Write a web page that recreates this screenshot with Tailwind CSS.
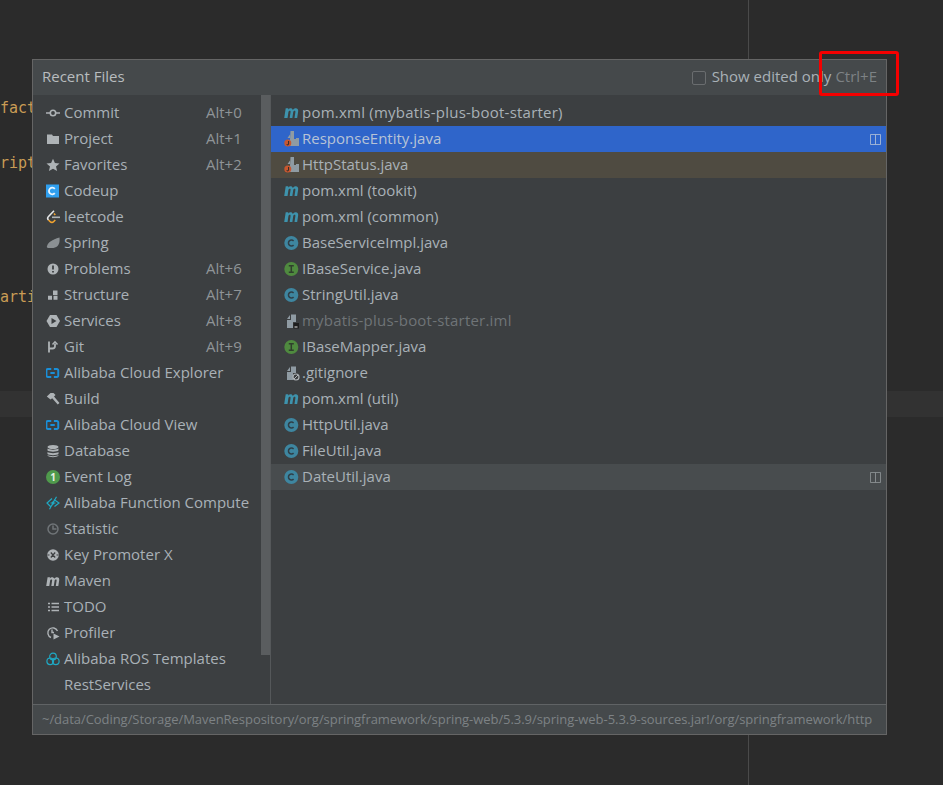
<!DOCTYPE html>
<html lang="en">
<head>
    <meta charset="UTF-8">
    <title>Recent Files</title>
    <script src="https://cdn.jsdelivr.net/npm/@tailwindcss/browser@4"></script>
</head>
<body class="m-0 bg-[#2b2b2b] overflow-hidden">
    <svg class="hidden">
        <symbol id="mvn" viewBox="0.8 4 14 9" preserveAspectRatio="none"><path d="M1 13 2.400 4.300h2.400l-.2 1.200C5.200 4.700 6 4.200 7 4.200c1 0 1.700.5 2 1.500.8-1 1.700-1.500 2.800-1.500 1.700 0 2.500 1.100 2.200 3l-.9 5.800h-2.500l.8-5.200c.1-.9-.1-1.300-.7-1.300-.6 0-1.200.5-1.300 1.300l-.8 5.200H6.100l.8-5.200c.1-.9-.1-1.300-.7-1.300-.6 0-1.200.5-1.300 1.300l-.8 5.200z" fill="currentColor"/></symbol>
        <symbol id="cls" viewBox="0 0 16 16"><circle cx="7.300" cy="8" r="7" fill="#3e86a0"/><path d="M9.600 5.900A3 3 0 1 0 9.600 10.100" fill="none" stroke="#2f3f48" stroke-width="1.500"/></symbol>
        <symbol id="ifc" viewBox="0 0 16 16"><circle cx="7.300" cy="8" r="7" fill="#4f8a3f"/><path d="M4.800 4.800h5M4.800 11.200h5M7.300 4.800v6.400" fill="none" stroke="#2f3f2c" stroke-width="1.500"/></symbol>
        <symbol id="ali" viewBox="0 0 16 16"><path d="M6 3.500H2a1.500 1.500 0 0 0-1.500 1.500v6a1.500 1.500 0 0 0 1.500 1.500H6M9 3.500h3.500a1.500 1.500 0 0 1 1.500 1.500v6a1.500 1.500 0 0 1-1.500 1.500H9M5 8h5" fill="none" stroke="#1a8fd8" stroke-width="2.200"/></symbol>
        <symbol id="jfile" viewBox="0 0 16 16"><path d="M6.500 0h3.500v8h2v-1h3v8H5.500V9H6zM3.500 7 6 3.500V7z" fill="#8f9ba3"/><circle cx="3.800" cy="12" r="3.500" fill="#c9572f"/><path d="M4.600 10v3a.9.9 0 0 1-1.800 0" fill="none" stroke="#2b2b2b" stroke-width="1"/></symbol>
        <symbol id="split" viewBox="0 0 12 12"><path d="M.5.500h11v11H.5zM6 .5v11" fill="none" stroke="currentColor"/></symbol>
    </svg>

    <!-- editor behind the popup -->
    <div class="relative h-[785px] w-[943px] font-['DejaVu_Sans_Mono',monospace] text-[15px] leading-[20px] text-[#c99c55]">
        <div class="absolute left-0 top-[98px]">fact</div>
        <div class="absolute left-0 top-[153px]">ript</div>
        <div class="absolute left-0 top-[287px]">arti</div>
        <div class="absolute left-0 right-0 top-[391px] h-[26px] bg-[#323232]"></div>
        <div class="absolute bottom-0 left-[748px] top-0 w-px bg-[#4a4a4a]"></div>

        <!-- popup -->
        <div class="absolute left-[32px] top-[59px] flex h-[676px] w-[855px] flex-col border border-[#656565] bg-[#3c3f41] font-['Open_Sans',sans-serif] text-[15px] leading-[26px] text-[#a9b1b7] [&_span]:-translate-y-px">
            <div class="flex h-[35px] shrink-0 items-center justify-between bg-[#45494b] pl-[9px] pr-[9px]">
                <span class="pb-[2px] font-medium text-[#b8bcbe]">Recent Files</span>
                <div class="flex items-center">
                    <div class="mr-[6px] h-[14px] w-[14px] rounded-[2px] border border-[#6a6d6f] bg-[#43474a]"></div>
                    <span class="mr-[4px] pb-[1px]">Show edited only</span>
                    <span class="pb-[1px] text-[#7d8285]">Ctrl+E</span>
                </div>
            </div>

            <div class="flex min-h-0 flex-1">
                <!-- tool windows -->
                <div class="relative w-[238px] shrink-0 border-r border-[#55585a] pt-[5px]">
                    <div class="absolute right-0 top-0 h-[560px] w-[9px] bg-[#5a5d5f]"></div>
                    <div class="flex h-[26px] items-center pl-[13px]">
                        <svg class="mr-[4px] h-[14px] w-[14px]" viewBox="0 0 14 14" fill="none" stroke="#aeb3b6" stroke-width="1.600"><circle cx="7" cy="7" r="2.700"/><path d="M0 7h4M10 7h4"/></svg>
                        <span class="w-[142px]">Commit</span><span class="text-[#8f9497]">Alt+0</span>
                    </div>
                    <div class="flex h-[26px] items-center pl-[13px]">
                        <svg class="mr-[4px] h-[14px] w-[14px]" viewBox="0 0 14 14" fill="#aeb3b6"><path d="M1 2.500h5l1 1.500h6v8H1z"/></svg>
                        <span class="w-[142px]">Project</span><span class="text-[#8f9497]">Alt+1</span>
                    </div>
                    <div class="flex h-[26px] items-center pl-[13px]">
                        <svg class="mr-[4px] h-[14px] w-[14px]" viewBox="0 0 14 14" fill="#aeb3b6"><path d="M7 .8l1.900 4.300 4.600.4-3.500 3 1.100 4.600L7 10.700l-4.100 2.400L4 8.500.5 5.500l4.600-.4z"/></svg>
                        <span class="w-[142px]">Favorites</span><span class="text-[#8f9497]">Alt+2</span>
                    </div>
                    <div class="flex h-[26px] items-center pl-[13px]">
                        <svg class="mr-[4px] h-[14px] w-[14px]" viewBox="0 0 14 14"><rect x="0" y="0.500" width="13" height="13" fill="#2f9fef"/><path d="M8.800 4.900a3.300 3.300 0 1 0 0 4.200" fill="none" stroke="#e8f5ff" stroke-width="1.800"/></svg>
                        <span>Codeup</span>
                    </div>
                    <div class="flex h-[26px] items-center pl-[13px]">
                        <svg class="mr-[4px] h-[14px] w-[14px]" viewBox="0 0 14 14" fill="none" stroke-width="1.600"><path d="M8 .8 2.500 6.500a2.500 2.500 0 0 0 0 3.500" stroke="#e4e6e7"/><path d="M6 7.300h8" stroke="#aeb3b6"/><path d="M2.500 10l1.500 1.500a2.700 2.700 0 0 0 3.800 0l1.500-1.500" stroke="#f0a32f"/><path d="M8 3.500l1.300 1.500" stroke="#f0a32f"/></svg>
                        <span>leetcode</span>
                    </div>
                    <div class="flex h-[26px] items-center pl-[13px]">
                        <svg class="mr-[4px] h-[14px] w-[14px]" viewBox="0 0 14 14" fill="#8b9093"><path d="M13.500 1.500c.6 5.500-1 10-6 10.500-2.500.2-4-.2-5.500 0 -.8-.3-1.500-1-1-1.800C2 6.500 6 3.500 13.500 1.500z"/></svg>
                        <span>Spring</span>
                    </div>
                    <div class="flex h-[26px] items-center pl-[13px]">
                        <svg class="mr-[4px] h-[14px] w-[14px]" viewBox="0 0 14 14"><circle cx="7" cy="7" r="5.500" fill="#aeb3b6"/><path d="M7 3.500v4M7 9v1.500" stroke="#3c3f41" stroke-width="1.800"/></svg>
                        <span class="w-[142px]">Problems</span><span class="text-[#8f9497]">Alt+6</span>
                    </div>
                    <div class="flex h-[26px] items-center pl-[13px]">
                        <svg class="mr-[4px] h-[14px] w-[14px]" viewBox="0 0 14 14" fill="#aeb3b6"><path d="M7 2.500h4.500V7H7zM2 7.800h4v4H2zM7.500 7.800h4v4h-4z"/></svg>
                        <span class="w-[142px]">Structure</span><span class="text-[#8f9497]">Alt+7</span>
                    </div>
                    <div class="flex h-[26px] items-center pl-[13px]">
                        <svg class="mr-[4px] h-[14px] w-[14px]" viewBox="0 0 14 14"><path d="M4 1h6.500L14 7l-3.500 6H4L.5 7z" fill="#aeb3b6"/><path d="M5.500 4v6l5-3z" fill="#3c3f41"/></svg>
                        <span class="w-[142px]">Services</span><span class="text-[#8f9497]">Alt+8</span>
                    </div>
                    <div class="flex h-[26px] items-center pl-[13px]">
                        <svg class="mr-[4px] h-[14px] w-[14px]" viewBox="0 0 14 14" fill="none" stroke="#aeb3b6" stroke-width="1.800"><path d="M3 1.500v11M3 8.500h3.500a2.500 2.500 0 0 0 2.500-2.500V3.500"/><path d="M6.500 4.500 9 1.800l2.500 2.700" stroke-width="1.500"/></svg>
                        <span class="w-[142px]">Git</span><span class="text-[#8f9497]">Alt+9</span>
                    </div>
                    <div class="flex h-[26px] items-center pl-[13px]">
                        <svg class="mr-[4px] h-[14px] w-[14px]"><use href="#ali"/></svg>
                        <span>Alibaba Cloud Explorer</span>
                    </div>
                    <div class="flex h-[26px] items-center pl-[13px]">
                        <svg class="mr-[4px] h-[14px] w-[14px]" viewBox="0 0 14 14" fill="#aeb3b6"><path d="M.8 4.500 4.500 1h3l2 2-1.500 1.500L13.500 11l-1.800 1.500-5.500-6.300L4.500 7.500z"/></svg>
                        <span>Build</span>
                    </div>
                    <div class="flex h-[26px] items-center pl-[13px]">
                        <svg class="mr-[4px] h-[14px] w-[14px]"><use href="#ali"/></svg>
                        <span>Alibaba Cloud View</span>
                    </div>
                    <div class="flex h-[26px] items-center pl-[13px]">
                        <svg class="mr-[4px] h-[14px] w-[14px]" viewBox="0 0 14 14" fill="#aeb3b6"><ellipse cx="7" cy="3" rx="5.500" ry="2"/><path d="M1.500 4.500C3 6 11 6 12.500 4.500V6.500C11 8 3 8 1.500 6.500zM1.500 8C3 9.500 11 9.500 12.500 8V10C11 11.500 3 11.500 1.500 10zM1.500 11C3 12.500 11 12.500 12.500 11V11.500C11 13.800 3 13.800 1.500 11.500z"/></svg>
                        <span>Database</span>
                    </div>
                    <div class="flex h-[26px] items-center pl-[13px]">
                        <div class="mr-[4px] flex h-[14px] w-[14px] items-center justify-center rounded-full bg-[#4f9a4c] text-[10px] font-bold leading-none text-[#e5efe3]">1</div>
                        <span>Event Log</span>
                    </div>
                    <div class="flex h-[26px] items-center pl-[13px]">
                        <svg class="mr-[4px] h-[14px] w-[14px]" viewBox="0 0 14 14" fill="none" stroke="#1fa9c4" stroke-width="1.200"><path d="M6 2.500 1 7l3.500 3.500M8 3.500 13 7l-4.500 3.500M10.500 .8 3.500 13.200M4.500 7h1.500l2-2M6 9l2-2h1.500"/></svg>
                        <span>Alibaba Function Compute</span>
                    </div>
                    <div class="flex h-[26px] items-center pl-[13px]">
                        <svg class="mr-[4px] h-[14px] w-[14px]" viewBox="0 0 14 14" fill="none" stroke="#707578" stroke-width="1.500"><circle cx="7" cy="7" r="5"/><path d="M7 3.500V7h3.500"/></svg>
                        <span>Statistic</span>
                    </div>
                    <div class="flex h-[26px] items-center pl-[13px]">
                        <svg class="mr-[4px] h-[14px] w-[14px]" viewBox="0 0 14 14"><circle cx="7" cy="7" r="5.800" fill="#aeb3b6"/><path d="M4.800 4.500l4.400 5M9.200 4.500l-4.400 5M1.500 7h2M10.500 7h2" stroke="#3c3f41" stroke-width="1.200"/></svg>
                        <span>Key Promoter X</span>
                    </div>
                    <div class="flex h-[26px] items-center pl-[13px]">
                        <svg class="mr-[4px] h-[9px] w-[14px] text-[#aeb3b6]"><use href="#mvn"/></svg>
                        <span>Maven</span>
                    </div>
                    <div class="flex h-[26px] items-center pl-[13px]">
                        <svg class="mr-[4px] h-[14px] w-[14px]" viewBox="0 0 14 14" stroke="#aeb3b6" stroke-width="1.500"><path d="M2 3.500h2M5.500 3.500H13M2 7h2M5.500 7H13M2 10.500h2M5.500 10.500H13"/></svg>
                        <span>TODO</span>
                    </div>
                    <div class="flex h-[26px] items-center pl-[13px]">
                        <svg class="mr-[4px] h-[14px] w-[14px]" viewBox="0 0 14 14" fill="none" stroke="#aeb3b6" stroke-width="1.400"><path d="M5 11.500A5 5 0 1 1 11.500 5"/><path d="M6 3.500V6.500h2"/><path d="M7.500 7.500v6l6-3z" fill="#aeb3b6" stroke="none"/></svg>
                        <span>Profiler</span>
                    </div>
                    <div class="flex h-[26px] items-center pl-[13px]">
                        <svg class="mr-[4px] h-[14px] w-[14px]" viewBox="0 0 14 14" fill="none" stroke="#1fa9c4" stroke-width="1.200"><circle cx="7" cy="4.500" r="3.300"/><circle cx="4.200" cy="9.300" r="3.300"/><circle cx="9.800" cy="9.300" r="3.300"/></svg>
                        <span>Alibaba ROS Templates</span>
                    </div>
                    <div class="flex h-[26px] items-center pl-[31px]"><span>RestServices</span></div>
                </div>

                <!-- files -->
                <div class="min-w-0 flex-1 pt-[5px] text-[#a9b1b7]">
                    <div class="flex h-[26px] items-center pl-[13px]"><svg class="mr-[3px] h-[10px] w-[15px] text-[#3e93ad]"><use href="#mvn"/></svg><span class="tracking-[0.23px]">pom.xml (mybatis-plus-boot-starter)</span></div>
                    <div class="flex h-[26px] items-center bg-[#2f65ca] pl-[13px] pr-[5px]"><svg class="mr-[2px] h-[16px] w-[16px]"><use href="#jfile"/></svg><span class="flex-1 text-[#b7c3d6]">ResponseEntity.java</span><svg class="h-[11px] w-[11px] text-[#a9bad6]"><use href="#split"/></svg></div>
                    <div class="flex h-[26px] items-center bg-[#4f4b41] pl-[13px]"><svg class="mr-[2px] h-[16px] w-[16px]"><use href="#jfile"/></svg><span>HttpStatus.java</span></div>
                    <div class="flex h-[26px] items-center pl-[13px]"><svg class="mr-[3px] h-[10px] w-[15px] text-[#3e93ad]"><use href="#mvn"/></svg><span>pom.xml (tookit)</span></div>
                    <div class="flex h-[26px] items-center pl-[13px]"><svg class="mr-[3px] h-[10px] w-[15px] text-[#3e93ad]"><use href="#mvn"/></svg><span>pom.xml (common)</span></div>
                    <div class="flex h-[26px] items-center pl-[13px]"><svg class="mr-[2px] h-[16px] w-[16px]"><use href="#cls"/></svg><span>BaseServiceImpl.java</span></div>
                    <div class="flex h-[26px] items-center pl-[13px]"><svg class="mr-[2px] h-[16px] w-[16px]"><use href="#ifc"/></svg><span>IBaseService.java</span></div>
                    <div class="flex h-[26px] items-center pl-[13px]"><svg class="mr-[2px] h-[16px] w-[16px]"><use href="#cls"/></svg><span>StringUtil.java</span></div>
                    <div class="flex h-[26px] items-center pl-[13px]">
                        <svg class="mr-[2px] h-[16px] w-[16px]" viewBox="0 0 16 16"><path d="M3 6l3-4v4zM7 1.500h5V9H9v6H3V7h4z" fill="#8f9ba3"/><rect x="9.500" y="10" width="5.500" height="5.500" fill="#1e1e1e"/><path d="M10.500 14h3" stroke="#e8e8e8"/></svg>
                        <span class="tracking-[0.2px] text-[#6f7477]">mybatis-plus-boot-starter.iml</span>
                    </div>
                    <div class="flex h-[26px] items-center pl-[13px]"><svg class="mr-[2px] h-[16px] w-[16px]"><use href="#ifc"/></svg><span>IBaseMapper.java</span></div>
                    <div class="flex h-[26px] items-center pl-[13px]">
                        <svg class="mr-[2px] h-[16px] w-[16px]" viewBox="0 0 16 16"><path d="M3 6l3-4v4zM7 1.500h5V8H9v7H3V7h4z" fill="#8f9ba3"/><circle cx="12" cy="12" r="3" fill="none" stroke="#aeb3b6" stroke-width="1.200"/><path d="M10 14l4-4" stroke="#aeb3b6"/></svg>
                        <span>.gitignore</span>
                    </div>
                    <div class="flex h-[26px] items-center pl-[13px]"><svg class="mr-[3px] h-[10px] w-[15px] text-[#3e93ad]"><use href="#mvn"/></svg><span>pom.xml (util)</span></div>
                    <div class="flex h-[26px] items-center pl-[13px]"><svg class="mr-[2px] h-[16px] w-[16px]"><use href="#cls"/></svg><span>HttpUtil.java</span></div>
                    <div class="flex h-[26px] items-center pl-[13px]"><svg class="mr-[2px] h-[16px] w-[16px]"><use href="#cls"/></svg><span>FileUtil.java</span></div>
                    <div class="flex h-[26px] items-center bg-[#484c4e] pl-[13px] pr-[5px]"><svg class="mr-[2px] h-[16px] w-[16px]"><use href="#cls"/></svg><span class="flex-1">DateUtil.java</span><svg class="h-[11px] w-[11px] text-[#8b9093]"><use href="#split"/></svg></div>
                </div>
            </div>

            <div class="flex h-[30px] shrink-0 items-center overflow-hidden whitespace-nowrap border-t border-[#606365] bg-[#45494b] pb-[2px] pl-[9px] text-[13px] tracking-[-0.05px] text-[#7d8285]">~/data/Coding/Storage/MavenRespository/org/springframework/spring-web/5.3.9/spring-web-5.3.9-sources.jar!/org/springframework/http</div>
        </div>

        <!-- red annotation -->
        <div class="absolute left-[819px] top-[51px] h-[45px] w-[80px] rounded-[3px] border-[3px] border-[#f40000]"></div>
    </div>
</body>
</html>
